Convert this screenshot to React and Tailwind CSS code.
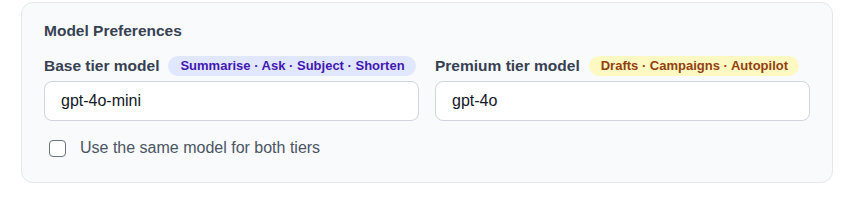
import React, { useState } from "react";

function ModelField({ label, badge, badgeClass, value, onChange }) {
  return (
    <div className="flex flex-col">
      <div className="flex items-center gap-[9px] mb-[5px] h-5">
        <span className="text-[15.5px] font-bold text-[#374151]">{label}</span>
        <span
          className={
            "h-5 flex items-center rounded-full pl-3 pr-[11px] text-[13px] font-bold " +
            badgeClass
          }
        >
          {badge}
        </span>
      </div>
      <input
        type="text"
        value={value}
        onChange={(e) => onChange(e.target.value)}
        className="h-10 w-full rounded-lg border border-[#d1d5db] bg-white px-4 text-base text-[#111827] focus:outline-none"
      />
    </div>
  );
}

export default function App() {
  const [baseModel, setBaseModel] = useState("gpt-4o-mini");
  const [premiumModel, setPremiumModel] = useState("gpt-4o");
  const [sameModel, setSameModel] = useState(false);

  return (
    <div
      className="bg-white min-h-[200px] pt-[2px] pl-[21px]"
      style={{ fontFamily: '"Liberation Sans", Arial, sans-serif' }}
    >
      <section className="w-[812px] rounded-xl border border-[#e5e7eb] bg-[#f8fafc] px-[22px] pt-[18px] pb-[22px]">
        <h3 className="text-[15.5px] font-bold text-[#374151] leading-5 mb-[15px]">
          Model Preferences
        </h3>

        <div className="grid grid-cols-2 gap-4">
          <ModelField
            label="Base tier model"
            badge="Summarise · Ask · Subject · Shorten"
            badgeClass="bg-[#e0e7ff] text-[#4318b0]"
            value={baseModel}
            onChange={setBaseModel}
          />
          <ModelField
            label="Premium tier model"
            badge="Drafts · Campaigns · Autopilot"
            badgeClass="bg-[#fef9c3] text-[#92400e]"
            value={premiumModel}
            onChange={setPremiumModel}
          />
        </div>

        <label className="mt-[15px] ml-[5px] flex items-center gap-[14px] text-base leading-6 text-[#4b5563]">
          <input
            type="checkbox"
            checked={sameModel}
            onChange={(e) => setSameModel(e.target.checked)}
            className="h-[17px] w-[17px] appearance-none rounded border border-[#6b7280] bg-white"
          />
          Use the same model for both tiers
        </label>
      </section>
    </div>
  );
}
